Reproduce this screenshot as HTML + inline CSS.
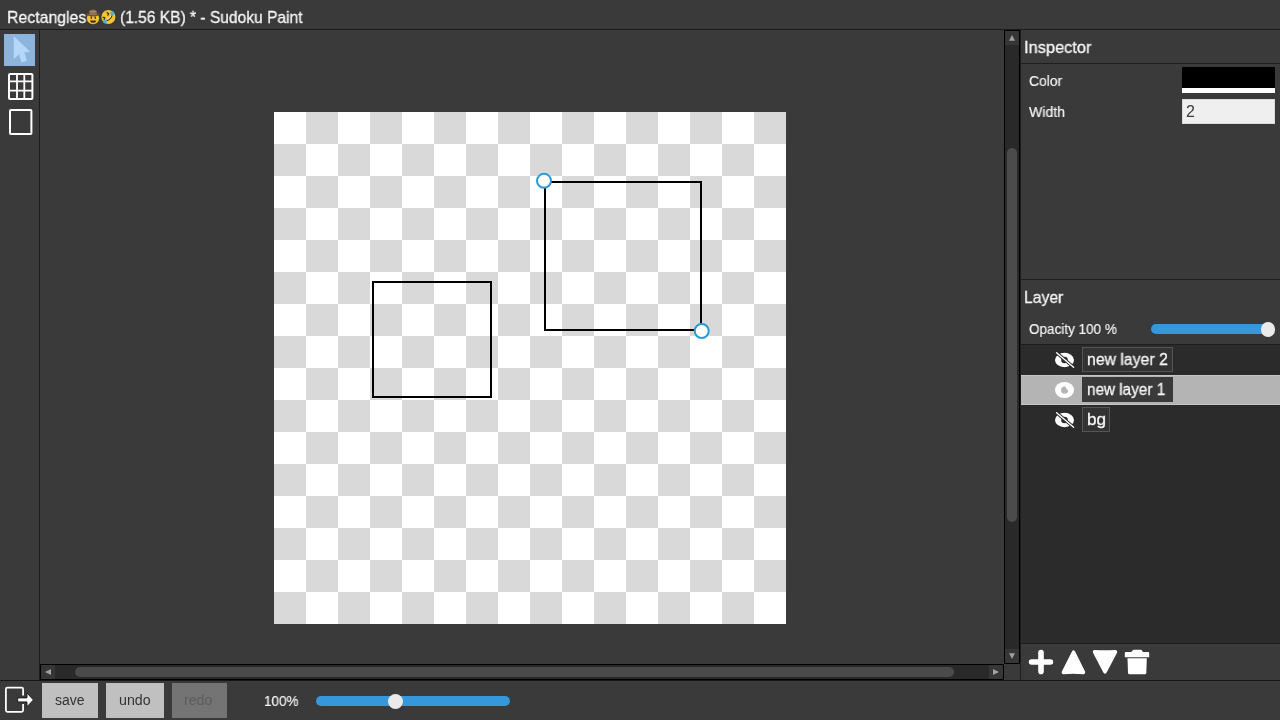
<!DOCTYPE html>
<html><head><meta charset="utf-8">
<style>
*{margin:0;padding:0;box-sizing:border-box}
html,body{width:1280px;height:720px;overflow:hidden;background:#3a3a3a;font-family:"Liberation Sans",sans-serif;color:#eee}
.a{position:absolute}
.t{position:absolute;white-space:pre;transform-origin:0 0;font-family:"Liberation Sans",sans-serif;will-change:transform;-webkit-text-stroke:0.3px currentColor}
.ln{position:absolute;background:#1e1e1e}
</style></head><body>
<!-- title bar -->
<div class="ln" style="left:0;top:29px;width:1280px;height:1px;background:#1c1c1c"></div>
<svg class="a" style="left:85px;top:7px" width="34" height="20" viewBox="0 0 34 20">
<circle cx="8" cy="11.2" r="6.1" fill="#f6c431"/>
<path d="M1.6 5.6 Q3 7.6 8 7.6 Q13 7.6 14.6 5.6 L14.4 7.4 Q12.6 9.4 8 9.4 Q3.4 9.4 1.8 7.4Z" fill="#6e5040"/>
<path d="M4.2 7 Q4.3 2.6 8 2.6 Q11.7 2.6 11.8 7 Q8 8 4.2 7Z" fill="#8a6a55"/>
<path d="M4.4 4.4 Q8 5.4 11.6 4.4" stroke="#b39a85" stroke-width="0.9" fill="none"/>
<rect x="5.7" y="9.6" width="1.3" height="2.3" rx="0.6" fill="#3a2a1a"/><rect x="9.6" y="9.6" width="1.3" height="2.3" rx="0.6" fill="#3a2a1a"/>
<path d="M4.9 13.6 H11.3 Q10.6 16.2 8.1 16.2 Q5.6 16.2 4.9 13.6Z" fill="#3a2a1a"/><path d="M6.3 15.2 Q8.1 16.6 9.9 15.2Z" fill="#e06a4a"/>
<circle cx="23.4" cy="10" r="7" fill="#f6c431"/>
<path d="M20.6 13.6 Q24 15.6 27.8 8.6 L26.6 8 Q24.5 12.6 21.2 12.4Z" fill="#3a2a1a"/>
<path d="M21.4 12.6 Q24.2 12.8 26.2 8.6" stroke="#fff6d0" stroke-width="1" fill="none"/>
<path d="M21.8 5.2 L23.6 6.8 L22.6 8.6" stroke="#3a2a1a" stroke-width="1.2" fill="none" stroke-linejoin="round"/>
<path d="M17.6 10.4 L19.8 10.6 L19 13" stroke="#3a2a1a" stroke-width="1.2" fill="none" stroke-linejoin="round"/>
<circle cx="27.3" cy="6.2" r="2" fill="#4ab0e0"/><circle cx="20" cy="14.4" r="2" fill="#4ab0e0"/>
</svg>
<div class="ln" style="left:39px;top:30px;width:1px;height:650px;background:#1c1c1c"></div>
<div class="ln" style="left:0;top:680px;width:1280px;height:1px;background:#161616"></div>

<!-- tools -->
<div class="a" style="left:4px;top:34px;width:31px;height:32px;background:#8db4dc"></div>
<svg class="a" style="left:0;top:30px" width="40" height="40" viewBox="0 0 40 40"><path d="M14 6.8 L14 28.6 L19.3 23.8 L21.6 32.2 L26.6 30.5 L24 22.3 L29.6 21.6 Z" fill="#b5d8fa" stroke="#b5d8fa" stroke-width="0.6" stroke-linejoin="round"/></svg>
<svg class="a" style="left:0;top:66px" width="40" height="40" viewBox="0 0 40 40"><g fill="none" stroke="#fff"><rect x="9" y="8" width="23.4" height="25" rx="1" stroke-width="2"/><path d="M17 8V33M24.3 8V33M9 15.4H32.4M9 24.6H32.4" stroke-width="1.8"/></g></svg>
<svg class="a" style="left:0;top:100px" width="40" height="40" viewBox="0 0 40 40"><rect x="10" y="10" width="21.4" height="24" rx="0.8" fill="none" stroke="#fff" stroke-width="2"/></svg>

<!-- canvas -->
<svg class="a" style="left:274px;top:112px" width="512" height="512" viewBox="0 0 512 512" shape-rendering="crispEdges">
<defs><pattern id="ck" width="64" height="64" patternUnits="userSpaceOnUse"><rect width="64" height="64" fill="#fff"/><rect x="32" y="0" width="32" height="32" fill="#d9d9d9"/><rect x="0" y="32" width="32" height="32" fill="#d9d9d9"/></pattern></defs>
<rect width="512" height="512" fill="url(#ck)"/>
<rect x="99" y="170" width="118" height="115" fill="none" stroke="#000" stroke-width="2"/>
<rect x="271" y="70" width="156" height="148" fill="none" stroke="#000" stroke-width="2"/>
</svg>
<svg class="a" style="left:274px;top:112px" width="512" height="512" viewBox="0 0 512 512">
<circle cx="270" cy="68.8" r="7" fill="#fff" stroke="#2b9ad8" stroke-width="2"/>
<circle cx="427.7" cy="219" r="7" fill="#fff" stroke="#2b9ad8" stroke-width="2"/>
</svg>

<!-- vertical scrollbar -->
<div class="a" style="left:1004px;top:30px;width:16px;height:634px;background:#000"></div>
<div class="a" style="left:1005px;top:31px;width:14px;height:632px;background:#292929"></div>
<div class="a" style="left:1005px;top:31px;width:14px;height:14px;background:#363636"></div>
<div class="a" style="left:1005px;top:649px;width:14px;height:14px;background:#363636"></div>
<svg class="a" style="left:1005px;top:31px" width="14" height="14"><path d="M4 9.8 L7 4 L10 9.8Z" fill="#a0a0a0"/></svg>
<svg class="a" style="left:1005px;top:649px" width="14" height="14"><path d="M4 4.2 L7 10 L10 4.2Z" fill="#a0a0a0"/></svg>
<div class="a" style="left:1007px;top:148px;width:10px;height:374px;border-radius:5px;background:#4b4b4b"></div>

<!-- horizontal scrollbar -->
<div class="a" style="left:40px;top:664px;width:964px;height:16px;background:#000"></div>
<div class="a" style="left:41px;top:665px;width:962px;height:14px;background:#292929"></div>
<div class="a" style="left:41px;top:665px;width:14px;height:14px;background:#363636"></div>
<div class="a" style="left:989px;top:665px;width:14px;height:14px;background:#363636"></div>
<svg class="a" style="left:41px;top:665px" width="14" height="14"><path d="M10 4 L4 7 L10 10Z" fill="#a0a0a0"/></svg>
<svg class="a" style="left:989px;top:665px" width="14" height="14"><path d="M4 4 L10 7 L4 10Z" fill="#a0a0a0"/></svg>
<div class="a" style="left:75px;top:667px;width:879px;height:10px;border-radius:5px;background:#4b4b4b"></div>

<!-- right panel -->
<div class="ln" style="left:1020px;top:30px;width:1px;height:650px;background:#1e1e1e"></div>
<div class="ln" style="left:1021px;top:63px;width:259px;height:1px"></div>
<div class="a" style="left:1182px;top:67px;width:93px;height:21px;background:#000"></div>
<div class="a" style="left:1182px;top:88px;width:93px;height:5px;background:#fff"></div>
<div class="a" style="left:1182px;top:99px;width:93px;height:25px;background:#efefef;border:1px solid #dadada"></div>

<div class="ln" style="left:1021px;top:279px;width:259px;height:1px"></div>
<div class="a" style="left:1151px;top:324px;width:118px;height:10px;border-radius:5px;background:#3498db"></div>
<div class="a" style="left:1260.5px;top:322px;width:14.5px;height:14.5px;border-radius:50%;background:#eaeaea"></div>
<div class="ln" style="left:1021px;top:344px;width:259px;height:1px"></div>
<div class="a" style="left:1021px;top:345px;width:259px;height:298px;background:#2b2b2b"></div>
<div class="a" style="left:1021px;top:375px;width:259px;height:30px;background:#b4b4b4;border-top:1px solid #c6c6c6;border-bottom:1px solid #c6c6c6"></div>
<div class="a" style="left:0;top:345px;width:1px;height:30px"><svg class="a" style="left:1054px;top:0" width="22" height="30" viewBox="0 0 22 30"><ellipse cx="10.5" cy="15" rx="9.5" ry="7.2" fill="#fff"/><circle cx="10.5" cy="15" r="3.3" fill="#2b2b2b"/><path d="M2.6 7.8 L19.6 22.2" stroke="#2b2b2b" stroke-width="3.2"/><path d="M2.6 7.8 L19.6 22.2" stroke="#fff" stroke-width="1.4" stroke-linecap="round"/></svg></div>
<div class="a" style="left:0;top:375px;width:1px;height:30px"><svg class="a" style="left:1054px;top:0" width="22" height="30" viewBox="0 0 22 30"><ellipse cx="10.5" cy="15" rx="9.5" ry="8" fill="#fff"/><path d="M10.6 11.4 A3.6 3.6 0 1 0 14.2 15.4 L12.1 13.4 Q12.4 11.7 10.6 11.4Z" fill="#b4b4b4"/></svg></div>
<div class="a" style="left:0;top:405px;width:1px;height:30px"><svg class="a" style="left:1054px;top:0" width="22" height="30" viewBox="0 0 22 30"><ellipse cx="10.5" cy="15" rx="9.5" ry="7.2" fill="#fff"/><circle cx="10.5" cy="15" r="3.3" fill="#2b2b2b"/><path d="M2.6 7.8 L19.6 22.2" stroke="#2b2b2b" stroke-width="3.2"/><path d="M2.6 7.8 L19.6 22.2" stroke="#fff" stroke-width="1.4" stroke-linecap="round"/></svg></div>
<div class="a" style="left:1082px;top:347px;width:91px;height:25px;border:1px solid #555;background:#333"></div>
<div class="a" style="left:1082px;top:377px;width:91px;height:25px;border:1px solid #3a3a3a;background:#3a3a3a"></div>
<div class="a" style="left:1082px;top:407px;width:28px;height:25px;border:1px solid #555;background:#333"></div>
<div class="ln" style="left:1021px;top:643px;width:259px;height:1px"></div>
<svg class="a" style="left:1024px;top:645px" width="64" height="34" viewBox="0 0 64 34">
<path d="M17 7.6V26.4M7.6 17H26.4" stroke="#fff" stroke-width="5.6" stroke-linecap="round"/>
<path d="M48.8 6.6 Q49.5 5.4 50.3 6.6 L60.2 26.6 Q60.9 28.2 59.2 28.4 Q48.8 27.6 39.6 28.4 Q38 28.2 38.7 26.6 Z" fill="#fff" stroke="#fff" stroke-width="1.6" stroke-linejoin="round"/>
</svg>
<svg class="a" style="left:1088px;top:645px" width="64" height="34" viewBox="0 0 64 34">
<path d="M16.2 27.4 Q17 28.6 17.8 27.4 L28.2 7.6 Q28.9 5.9 27.2 5.7 Q17 6.5 6.8 5.7 Q5.1 5.9 5.8 7.6 Z" fill="#fff" stroke="#fff" stroke-width="1.6" stroke-linejoin="round"/>
<path d="M44.8 5.2 Q45 4.8 45.8 4.8 H52.7 Q53.6 4.8 54 5.6 L54.8 7 H60.5 Q61.2 7.2 61.2 8 V12.2 H36.8 V8 Q36.8 7.2 37.5 7 H43.2 Z" fill="#fff"/>
<path d="M39.5 13.2 H58.8 L58.3 28 Q58.1 29.2 56.8 29.2 H41.5 Q40.2 29.2 40 28 Z" fill="#fff"/>
</svg>


<!-- bottom bar -->
<svg class="a" style="left:0;top:682px" width="40" height="36" viewBox="0 0 40 36">
<path d="M23.1 13.4 V7.2 Q23.1 5.7 21.6 5.7 H7.4 Q5.9 5.7 5.9 7.2 V28.3 Q5.9 29.8 7.4 29.8 H21.6 Q23.1 29.8 23.1 28.3 V22" fill="none" stroke="#fff" stroke-width="1.75"/>
<path d="M17.7 15.9 H27 V11 L33.4 17.9 L27 24.8 V19.9 H17.7Z" fill="#fff" stroke="#151515" stroke-width="0.9" stroke-linejoin="round"/>
</svg>
<div class="a" style="left:42px;top:683px;width:56px;height:35px;background:#c0c0c0"></div>
<div class="a" style="left:106px;top:683px;width:58px;height:35px;background:#c0c0c0"></div>
<div class="a" style="left:172px;top:683px;width:55px;height:35px;background:#747474"></div>
<div class="a" style="left:316px;top:696px;width:194px;height:10px;border-radius:5px;background:#3498db"></div>
<div class="a" style="left:388px;top:694px;width:15px;height:15px;border-radius:50%;background:#eaeaea"></div>

<!-- texts -->
<div class="t" style="left:7px;top:9px;font-size:17px;line-height:17px;color:#f6f6f6;transform:scaleX(0.933);">Rectangles</div>
<div class="t" style="left:120px;top:9px;font-size:17px;line-height:17px;color:#f6f6f6;transform:scaleX(0.915);">(1.56 KB) * - Sudoku Paint</div>
<div class="t" style="left:1023.6px;top:39px;font-size:17px;line-height:17px;color:#f6f6f6;transform:scaleX(0.965);">Inspector</div>
<div class="t" style="left:1028.5px;top:74px;font-size:14.5px;line-height:14.5px;color:#f6f6f6;transform:scaleX(0.958);-webkit-text-stroke:0.15px currentColor">Color</div>
<div class="t" style="left:1029.4px;top:105px;font-size:14.5px;line-height:14.5px;color:#f6f6f6;transform:scaleX(0.972);-webkit-text-stroke:0.15px currentColor">Width</div>
<div class="t" style="left:1024px;top:289px;font-size:17px;line-height:17px;color:#f6f6f6;transform:scaleX(0.924);">Layer</div>
<div class="t" style="left:1028.5px;top:322px;font-size:14.5px;line-height:14.5px;color:#f6f6f6;transform:scaleX(0.931);-webkit-text-stroke:0.15px currentColor">Opacity 100 %</div>
<div class="t" style="left:1087px;top:352px;font-size:16px;line-height:16px;color:#f6f6f6;transform:scaleX(0.9875);">new layer 2</div>
<div class="t" style="left:1086.5px;top:382px;font-size:16px;line-height:16px;color:#f6f6f6;transform:scaleX(0.955);">new layer 1</div>
<div class="t" style="left:1086.5px;top:412px;font-size:16px;line-height:16px;color:#f6f6f6;transform:scaleX(1.07);">bg</div>
<div class="t" style="left:54.7px;top:693px;font-size:14px;line-height:14px;color:#333333;transform:scaleX(0.988);-webkit-text-stroke:0">save</div>
<div class="t" style="left:118.7px;top:693px;font-size:14px;line-height:14px;color:#333333;transform:scaleX(1.017);-webkit-text-stroke:0">undo</div>
<div class="t" style="left:184.3px;top:693px;font-size:14px;line-height:14px;color:#5c5c5c;transform:scaleX(1.01);-webkit-text-stroke:0">redo</div>
<div class="t" style="left:263.6px;top:693px;font-size:15px;line-height:15px;color:#f6f6f6;transform:scaleX(0.9);-webkit-text-stroke:0.15px currentColor">100%</div>
<div class="t" style="left:1185.5px;top:104px;font-size:16px;line-height:16px;color:#3c3c3c;transform:scaleX(1.0);-webkit-text-stroke:0">2</div>
</body></html>
